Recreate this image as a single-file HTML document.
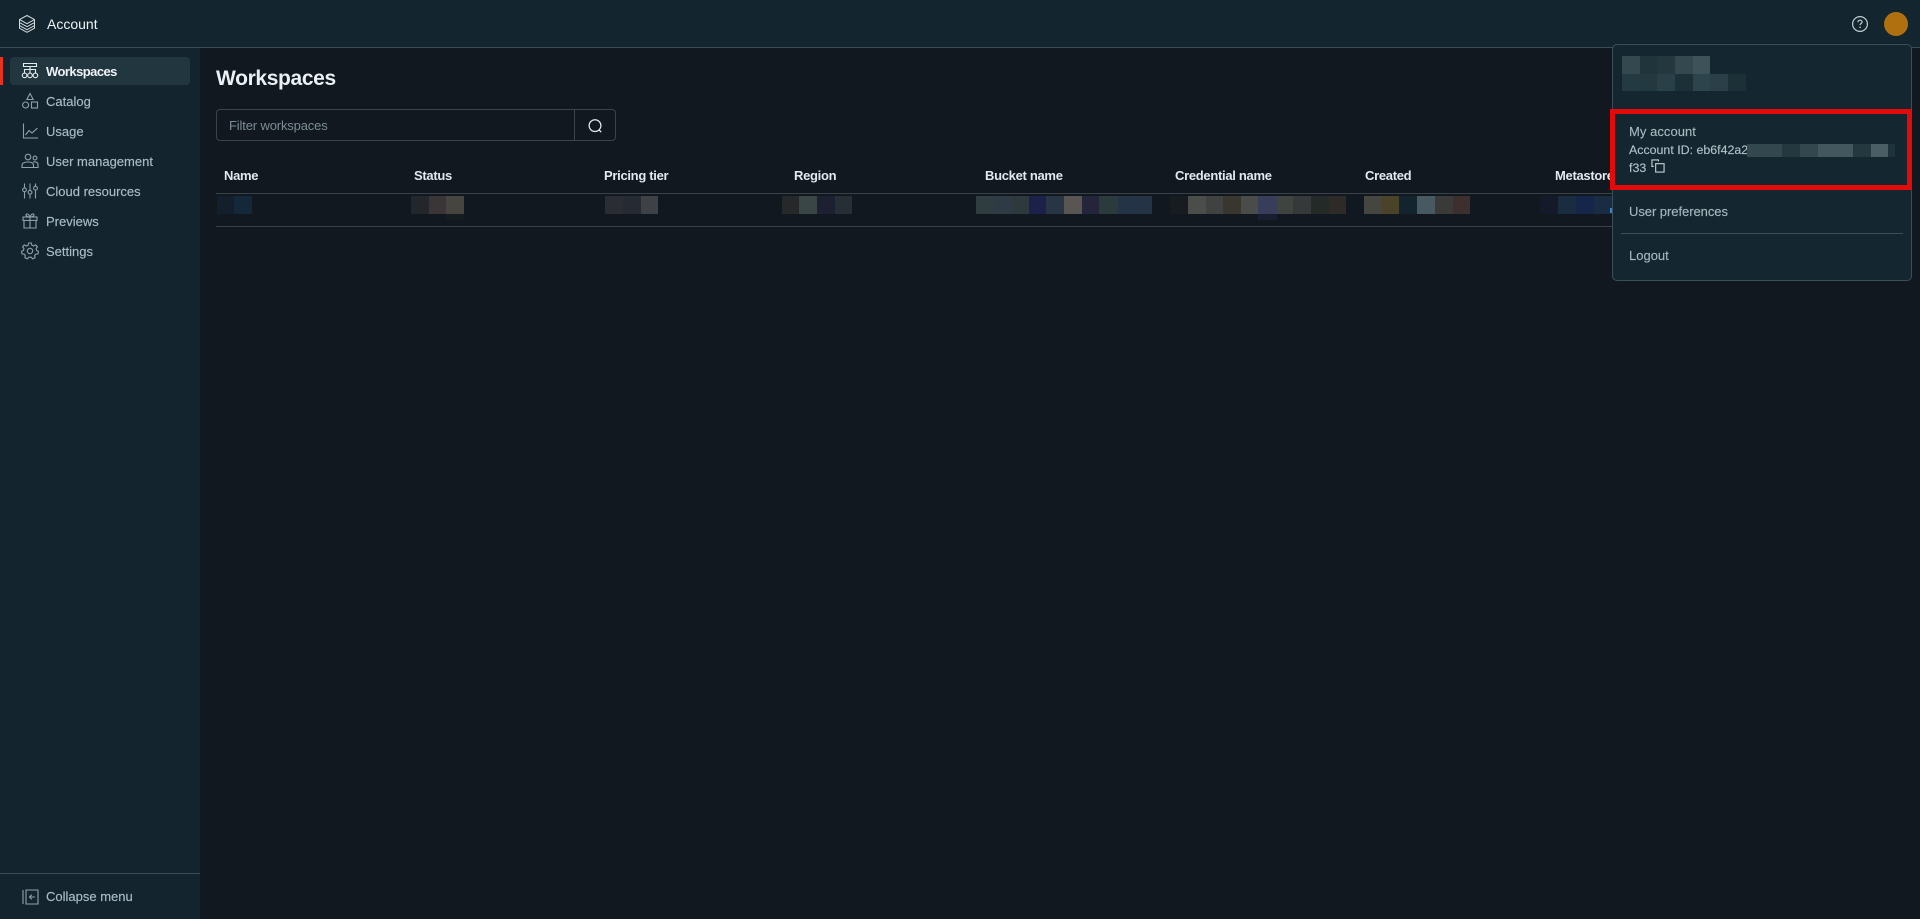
<!DOCTYPE html>
<html lang="en">
<head>
<meta charset="utf-8">
<title>Account</title>
<style>
html,body{margin:0;padding:0;width:1920px;height:919px;overflow:hidden;background:#11181f;font-family:"Liberation Sans",sans-serif;}
#app{position:relative;width:1920px;height:919px;overflow:hidden;background:#11181f;}
.a{position:absolute;}
.t{position:absolute;white-space:nowrap;line-height:16px;height:16px;}
.b{position:absolute;}
#top{left:0;top:0;width:1920px;height:47px;background:#13252f;border-bottom:1px solid #3c4c54;}
#side{left:0;top:48px;width:200px;height:871px;background:#13242f;}
.nav{left:46px;font-size:13px;color:#a9bcc6;-webkit-text-stroke:.15px #a9bcc6;}
.th{font-size:13px;color:#e2e9ee;font-weight:bold;top:168px;letter-spacing:-.3px;}
.menu{left:1629px;font-size:13px;color:#a5b6be;-webkit-text-stroke:.15px #a5b6be;}
svg{position:absolute;overflow:visible;fill:none;}
.ic{stroke:#8ea2ac;stroke-width:1.1;width:18px;height:18px;left:21px;}
</style>
</head>
<body>
<div id="app">
  <div class="a" id="top"></div>
  <div class="a" id="side"></div>

  <!-- logo -->
  <svg style="left:18px;top:14px;width:18px;height:20px" viewBox="0 0 18 20" stroke="#d3dbe0" stroke-width="1" stroke-linejoin="round">
    <path d="M9 1.5 16.5 5.6 9 9.7 1.5 5.6Z"/>
    <path d="M1.5 5.6V8.6L9 12.7 16.5 8.6V5.6"/>
    <path d="M1.5 8.6V11.6L9 15.7 16.5 11.6V8.6"/>
    <path d="M1.5 11.6V14.2L9 18.3 16.5 14.2V11.6"/>
  </svg>
  <div class="t" style="left:47px;top:16px;font-size:14px;color:#eef3f5">Account</div>

  <!-- header right -->
  <svg style="left:1851px;top:15px;width:18px;height:18px" viewBox="0 0 18 18">
    <circle cx="9" cy="9" r="7.4" stroke="#c3ced3" stroke-width="1.2"/>
    <path d="M6.9 7.2C6.9 5.9 7.9 5.2 9 5.2 10.2 5.2 11.1 6 11.1 7 11.1 8.3 9.1 8.5 9.1 10.1" stroke="#c3ced3" stroke-width="1.2"/>
    <circle cx="9.1" cy="12.3" r=".8" fill="#c3ced3"/>
  </svg>
  <div class="a" style="left:1884px;top:12px;width:24px;height:24px;border-radius:50%;background:#b0700f"></div>

  <!-- sidebar -->
  <div class="a" style="left:0;top:57px;width:3px;height:28px;background:#e8321c"></div>
  <div class="a" style="left:10px;top:57px;width:180px;height:28px;background:#22363f;border-radius:4px"></div>

  <svg class="ic" style="top:62px;stroke:#e4ebee" viewBox="0 0 18 18">
    <path d="M2.5 1.5H15.5V4.5H2.5ZM9 4.5V7M3.5 11V7.5H14.5V11M9 7V11"/>
    <circle cx="3.6" cy="13.4" r="2.3"/><circle cx="9" cy="13.4" r="2.3"/><circle cx="14.4" cy="13.4" r="2.3"/>
  </svg>
  <div class="t nav" style="top:64px;color:#eef3f6;font-weight:bold;-webkit-text-stroke:0;letter-spacing:-.55px">Workspaces</div>

  <svg class="ic" style="top:92px" viewBox="0 0 18 18">
    <path d="M9 1.5 12.2 7.5H5.8Z"/><circle cx="4.6" cy="13" r="3"/><rect x="10.5" y="10" width="6" height="6"/>
  </svg>
  <div class="t nav" style="top:94px">Catalog</div>

  <svg class="ic" style="top:122px" viewBox="0 0 18 18">
    <path d="M2.5 1.5V16H17"/><path d="M4.5 13 8 8.5 11 11 16.5 6"/>
  </svg>
  <div class="t nav" style="top:124px">Usage</div>

  <svg class="ic" style="top:152px" viewBox="0 0 18 18">
    <circle cx="7" cy="5" r="2.8"/><circle cx="14" cy="6" r="1.9"/>
    <path d="M1 15.5V13.5C1 11 3.5 10 7 10S12.5 11 12.5 13.5V15.5Z"/>
    <path d="M12 10C14 9.6 17 10 17 12.5V15.5H12.5"/>
  </svg>
  <div class="t nav" style="top:154px">User management</div>

  <svg class="ic" style="top:182px" viewBox="0 0 18 18">
    <path d="M3.5 1.5V6M3.5 9.5V16.5M9 1.5V8.5M9 12V16.5M14.5 1.5V4.5M14.5 8V16.5"/>
    <circle cx="3.5" cy="7.8" r="1.9"/><circle cx="9" cy="10.3" r="1.9"/><circle cx="14.5" cy="6.2" r="1.9"/>
  </svg>
  <div class="t nav" style="top:184px">Cloud resources</div>

  <svg class="ic" style="top:212px" viewBox="0 0 18 18">
    <rect x="2" y="5" width="14" height="3.4"/><path d="M3 8.4V16H15V8.4M9 5V16"/>
    <path d="M9 5C7.5 5 5 4.4 5 2.9 5 1.4 7.6 1.3 9 5ZM9 5C10.5 5 13 4.4 13 2.9 13 1.4 10.4 1.3 9 5Z"/>
  </svg>
  <div class="t nav" style="top:214px">Previews</div>

  <svg class="ic" style="top:242px" viewBox="0 0 18 18">
    <circle cx="9" cy="9" r="2.7"/>
    <path d="M7.6 1H10.4L10.9 3.2 12.7 4 14.7 2.9 16.4 4.9 15 6.6 15.6 8.4 17.5 9.4 17 12 14.8 12.1 13.6 13.6 14.1 15.8 11.6 16.9 10.3 15.2H7.7L6.4 16.9 3.9 15.8 4.4 13.6 3.2 12.1 1 12 .5 9.4 2.4 8.4 3 6.6 1.6 4.9 3.3 2.9 5.3 4 7.1 3.2Z" stroke-linejoin="round"/>
  </svg>
  <div class="t nav" style="top:244px">Settings</div>

  <div class="a" style="left:0;top:873px;width:200px;height:1px;background:#3a4c55"></div>
  <svg class="ic" style="top:888px;left:22px" viewBox="0 0 18 18">
    <path d="M1 2V16M4 2H16V16H4ZM4 2V16"/>
    <path d="M13 9H7.5M9.8 6.6 7.5 9 9.8 11.4"/>
  </svg>
  <div class="t nav" style="top:889px">Collapse menu</div>

  <!-- main -->
  <div class="t" style="left:216px;top:67px;height:24px;line-height:24px;font-size:21px;font-weight:bold;color:#eaf0f4;letter-spacing:-.35px">Workspaces</div>

  <div class="a" style="left:216px;top:109px;width:398px;height:30px;border:1px solid #3a454b;border-radius:4px"></div>
  <div class="a" style="left:574px;top:109px;width:1px;height:32px;background:#3a454b"></div>
  <div class="t" style="left:229px;top:118px;font-size:13px;color:#7c8c95;letter-spacing:-.15px">Filter workspaces</div>
  <svg style="left:587px;top:118px;width:16px;height:16px" viewBox="0 0 18 18" stroke="#e4eaed" stroke-width="1.4">
    <circle cx="9" cy="8.6" r="6.6"/><path d="M13.6 13.4 16 16"/>
  </svg>

  <div class="t th" style="left:224px">Name</div>
  <div class="t th" style="left:414px">Status</div>
  <div class="t th" style="left:604px">Pricing tier</div>
  <div class="t th" style="left:794px">Region</div>
  <div class="t th" style="left:985px">Bucket name</div>
  <div class="t th" style="left:1175px">Credential name</div>
  <div class="t th" style="left:1365px">Created</div>
  <div class="t th" style="left:1555px">Metastore</div>

  <div class="a" style="left:216px;top:193px;width:1396px;height:1px;background:#3a4247"></div>
  <div class="a" style="left:216px;top:226px;width:1396px;height:1px;background:#3a4247"></div>

  <!-- blurred cells -->
  <div class="b" style="left:217px;top:196px;width:17px;height:18px;background:#141f2c"></div>
  <div class="b" style="left:234px;top:196px;width:18px;height:18px;background:#15283a"></div>

  <div class="b" style="left:411px;top:196px;width:18px;height:18px;background:#23262a"></div>
  <div class="b" style="left:429px;top:196px;width:17px;height:18px;background:#3a3536"></div>
  <div class="b" style="left:446px;top:196px;width:18px;height:18px;background:#474540"></div>
  <div class="b" style="left:446px;top:214px;width:18px;height:6px;background:#171c20"></div>

  <div class="b" style="left:605px;top:196px;width:18px;height:18px;background:#2a2d33"></div>
  <div class="b" style="left:623px;top:196px;width:18px;height:18px;background:#262a32"></div>
  <div class="b" style="left:641px;top:196px;width:17px;height:18px;background:#3e4145"></div>

  <div class="b" style="left:782px;top:196px;width:17px;height:18px;background:#26282a"></div>
  <div class="b" style="left:799px;top:196px;width:18px;height:18px;background:#3a4646"></div>
  <div class="b" style="left:817px;top:196px;width:18px;height:18px;background:#1d2030"></div>
  <div class="b" style="left:835px;top:196px;width:17px;height:18px;background:#262f35"></div>

  <div class="b" style="left:976px;top:196px;width:18px;height:18px;background:#303d40"></div>
  <div class="b" style="left:994px;top:196px;width:18px;height:18px;background:#2e3a44"></div>
  <div class="b" style="left:1012px;top:196px;width:17px;height:18px;background:#2e393e"></div>
  <div class="b" style="left:1029px;top:196px;width:17px;height:18px;background:#1b2148"></div>
  <div class="b" style="left:1046px;top:196px;width:18px;height:18px;background:#283545"></div>
  <div class="b" style="left:1064px;top:196px;width:18px;height:18px;background:#595552"></div>
  <div class="b" style="left:1082px;top:196px;width:17px;height:18px;background:#24243a"></div>
  <div class="b" style="left:1099px;top:196px;width:19px;height:18px;background:#2b3a3c"></div>
  <div class="b" style="left:1118px;top:196px;width:34px;height:18px;background:#243446"></div>

  <div class="b" style="left:1170px;top:196px;width:18px;height:18px;background:#171c20"></div>
  <div class="b" style="left:1188px;top:196px;width:18px;height:18px;background:#4a4d49"></div>
  <div class="b" style="left:1206px;top:196px;width:17px;height:18px;background:#3f4241"></div>
  <div class="b" style="left:1223px;top:196px;width:18px;height:18px;background:#38362f"></div>
  <div class="b" style="left:1241px;top:196px;width:17px;height:18px;background:#4a4c4a"></div>
  <div class="b" style="left:1258px;top:196px;width:19px;height:18px;background:#383e5a"></div>
  <div class="b" style="left:1258px;top:214px;width:19px;height:6px;background:#1a1e30"></div>
  <div class="b" style="left:1277px;top:196px;width:16px;height:18px;background:#3f4440"></div>
  <div class="b" style="left:1293px;top:196px;width:18px;height:18px;background:#35393a"></div>
  <div class="b" style="left:1311px;top:196px;width:18px;height:18px;background:#242a28"></div>
  <div class="b" style="left:1329px;top:196px;width:17px;height:18px;background:#2e2a28"></div>

  <div class="b" style="left:1364px;top:196px;width:18px;height:18px;background:#45463f"></div>
  <div class="b" style="left:1382px;top:196px;width:17px;height:18px;background:#4a4328"></div>
  <div class="b" style="left:1399px;top:196px;width:18px;height:18px;background:#13242e"></div>
  <div class="b" style="left:1417px;top:196px;width:18px;height:18px;background:#475a62"></div>
  <div class="b" style="left:1435px;top:196px;width:18px;height:18px;background:#3a3a38"></div>
  <div class="b" style="left:1453px;top:196px;width:17px;height:18px;background:#3e2f2f"></div>

  <div class="b" style="left:1540px;top:196px;width:18px;height:18px;background:#141a2a"></div>
  <div class="b" style="left:1558px;top:196px;width:18px;height:18px;background:#1a2d40"></div>
  <div class="b" style="left:1576px;top:196px;width:18px;height:18px;background:#16264a"></div>
  <div class="b" style="left:1594px;top:196px;width:18px;height:18px;background:#1a2c42"></div>
  <div class="b" style="left:1610px;top:208px;width:2px;height:5px;background:#3f7fd0"></div>

  <!-- dropdown -->
  <div class="a" style="left:1612px;top:44px;width:298px;height:235px;background:#14262f;border:1px solid #3b4f58;border-radius:5px"></div>

  <div class="b" style="left:1622px;top:56px;width:18px;height:18px;background:#344850"></div>
  <div class="b" style="left:1640px;top:56px;width:17px;height:18px;background:#20343b"></div>
  <div class="b" style="left:1657px;top:56px;width:18px;height:18px;background:#24363e"></div>
  <div class="b" style="left:1675px;top:56px;width:18px;height:18px;background:#344850"></div>
  <div class="b" style="left:1693px;top:56px;width:17px;height:18px;background:#3e525a"></div>
  <div class="b" style="left:1622px;top:74px;width:18px;height:17px;background:#243a42"></div>
  <div class="b" style="left:1640px;top:74px;width:17px;height:17px;background:#23383f"></div>
  <div class="b" style="left:1657px;top:74px;width:18px;height:17px;background:#2a4048"></div>
  <div class="b" style="left:1675px;top:74px;width:18px;height:17px;background:#1c3038"></div>
  <div class="b" style="left:1693px;top:74px;width:17px;height:17px;background:#2e444c"></div>
  <div class="b" style="left:1710px;top:74px;width:18px;height:17px;background:#2a3f47"></div>
  <div class="b" style="left:1728px;top:74px;width:18px;height:17px;background:#1c3038"></div>

  <div class="a" style="left:1610px;top:109px;width:292px;height:71px;border:5px solid #e40a0a"></div>

  <div class="t menu" style="top:124px;letter-spacing:.05px">My account</div>
  <div class="t menu" style="top:142px;font-size:12.4px;color:#b4c4cc">Account ID: eb6f42a2</div>
  <div class="b" style="left:1747px;top:144px;width:35px;height:13px;background:#33474f"></div>
  <div class="b" style="left:1782px;top:144px;width:18px;height:13px;background:#24383f"></div>
  <div class="b" style="left:1800px;top:144px;width:18px;height:13px;background:#33474f"></div>
  <div class="b" style="left:1818px;top:144px;width:35px;height:13px;background:#43575f"></div>
  <div class="b" style="left:1853px;top:144px;width:18px;height:13px;background:#24383f"></div>
  <div class="b" style="left:1871px;top:144px;width:17px;height:13px;background:#4a5e66"></div>
  <div class="b" style="left:1888px;top:144px;width:7px;height:13px;background:#1f333b"></div>
  <div class="t menu" style="top:160px;font-size:12.4px;color:#b4c4cc">f33</div>
  <svg style="left:1651px;top:159px;width:14px;height:14px" viewBox="0 0 15 15" stroke="#c4d0d6" stroke-width="1.2">
    <rect x="5" y="5" width="9" height="9"/><path d="M8 2.5V1H1V8H3"/>
  </svg>

  <div class="t menu" style="top:204px;letter-spacing:-.05px">User preferences</div>
  <div class="a" style="left:1621px;top:233px;width:282px;height:1px;background:#3b4f58"></div>
  <div class="t menu" style="top:248px">Logout</div>
</div>
</body>
</html>
